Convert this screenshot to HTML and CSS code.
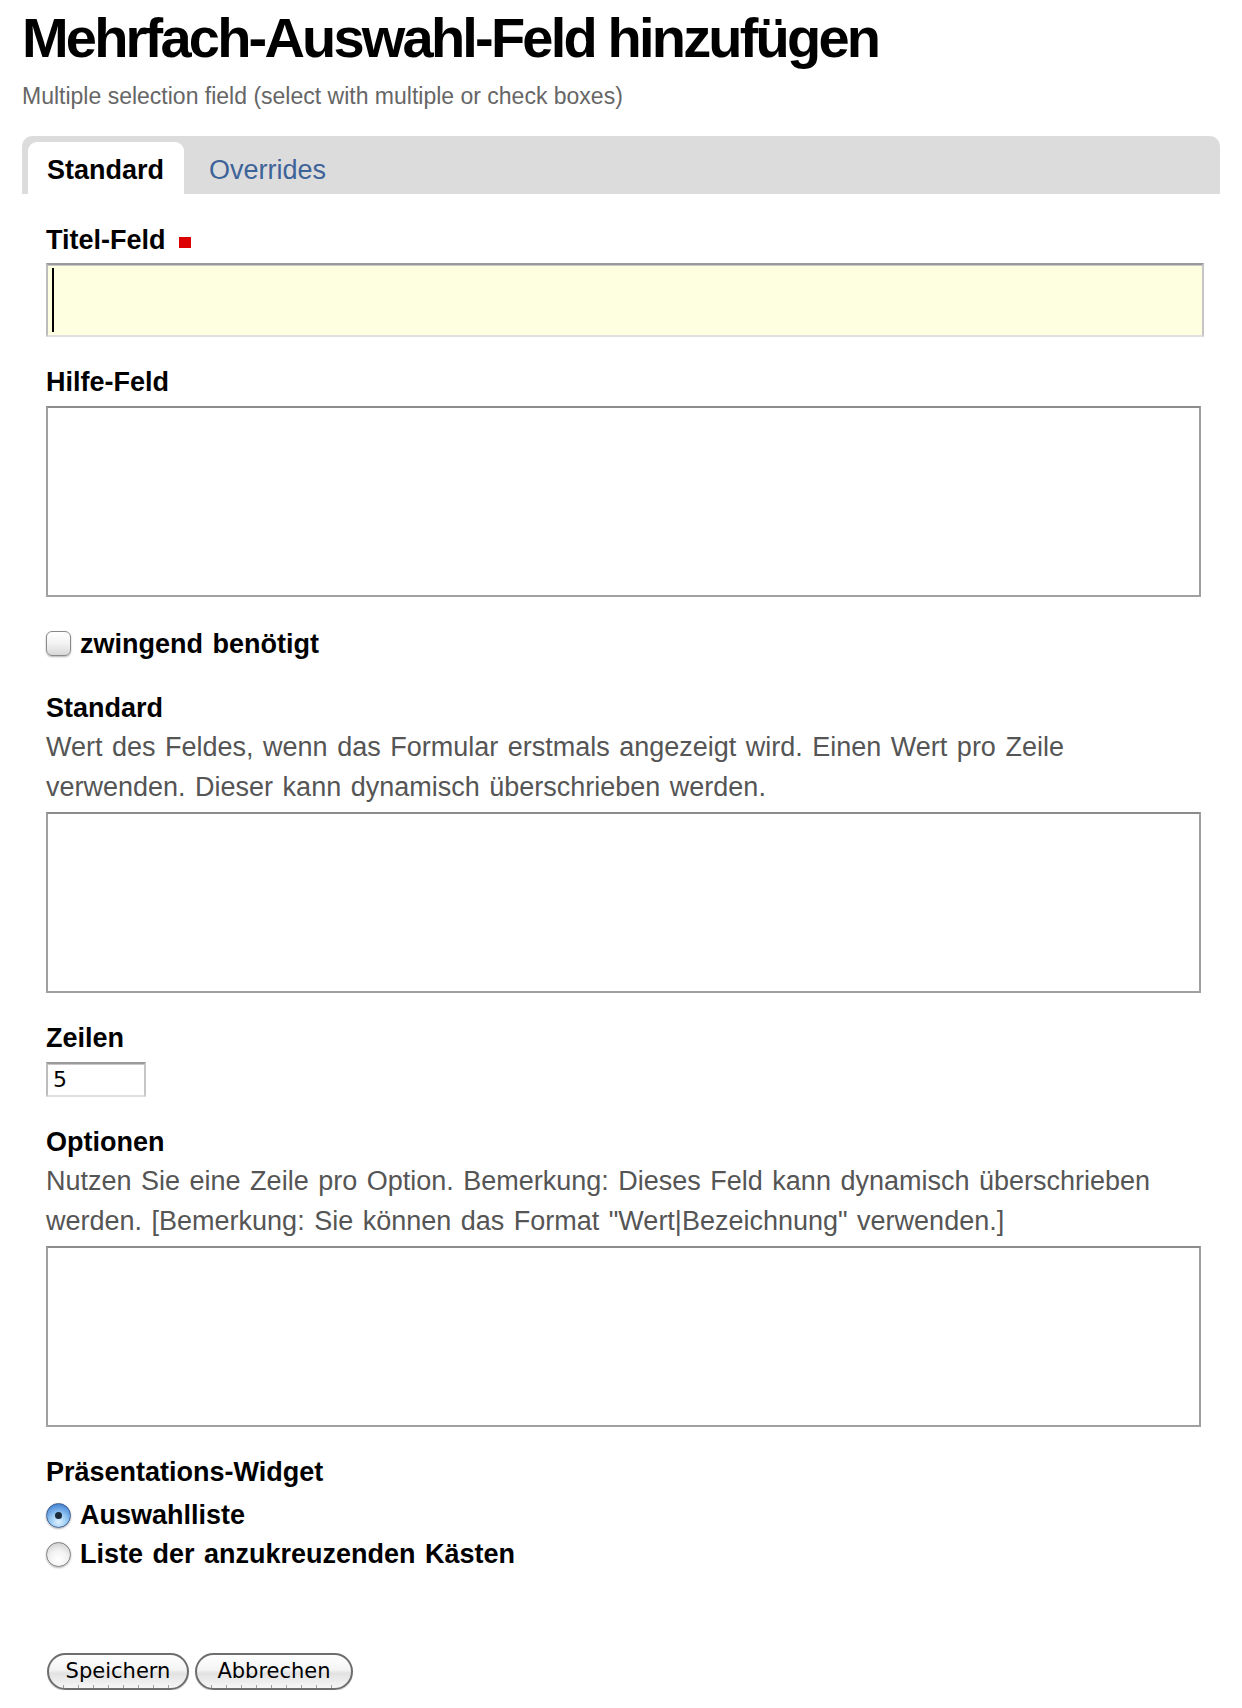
FILE: index.html
```html
<!DOCTYPE html>
<html lang="de">
<head>
<meta charset="utf-8">
<title>Mehrfach-Auswahl-Feld hinzufügen</title>
<link rel="stylesheet" href="styles.css">
</head>
<body>
<div class="page">
  <header class="head">
    <h1 class="title">Mehrfach-Auswahl-Feld hinzufügen</h1>
    <p class="subtitle">Multiple selection field (select with multiple or check boxes)</p>
  </header>

  <nav class="tabbar">
    <span class="tab tab-active">Standard</span>
    <span class="tab tab-link">Overrides</span>
  </nav>

  <form class="form">
    <div class="field">
      <label class="label">Titel-Feld <span class="required"></span></label>
      <div class="input-wrap">
        <input class="text-input title-input" type="text">
        <span class="caret"></span>
      </div>
    </div>

    <div class="field">
      <label class="label">Hilfe-Feld</label>
      <textarea class="area area-help"></textarea>
    </div>

    <div class="field">
      <div class="choice">
        <span class="checkbox"></span>
        <span class="choice-text">zwingend benötigt</span>
      </div>
    </div>

    <div class="field">
      <label class="label">Standard</label>
      <div class="help">Wert des Feldes, wenn das Formular erstmals angezeigt wird. Einen Wert pro Zeile verwenden. Dieser kann dynamisch überschrieben werden.</div>
      <textarea class="area area-std"></textarea>
    </div>

    <div class="field">
      <label class="label">Zeilen</label>
      <input class="text-input small-input" type="text" value="5">
    </div>

    <div class="field">
      <label class="label">Optionen</label>
      <div class="help">Nutzen Sie eine Zeile pro Option. Bemerkung: Dieses Feld kann dynamisch überschrieben werden. [Bemerkung: Sie können das Format "Wert|Bezeichnung" verwenden.]</div>
      <textarea class="area area-std"></textarea>
    </div>

    <div class="field">
      <label class="label">Präsentations-Widget</label>
      <div class="radios">
        <div class="choice radio-row">
          <span class="radio radio-on"><span class="dot"></span></span>
          <span class="choice-text">Auswahlliste</span>
        </div>
        <div class="choice radio-row">
          <span class="radio"></span>
          <span class="choice-text">Liste der anzukreuzenden Kästen</span>
        </div>
      </div>
    </div>

    <div class="buttons">
      <button type="button" class="btn btn-save">Speichern</button>
      <button type="button" class="btn btn-cancel">Abbrechen</button>
    </div>
  </form>
</div>
</body>
</html>
```

FILE: styles.css
```css
* { box-sizing: border-box; }

html, body {
  margin: 0;
  padding: 0;
  background: #ffffff;
}

body {
  font-family: "Liberation Sans", Arial, Helvetica, sans-serif;
  color: #000;
}

.page {
  padding: 6px 22px 0 22px;
  width: 1242px;
}

.title {
  margin: 0;
  font-size: 56px;
  line-height: 64px;
  font-weight: bold;
  letter-spacing: -2.8px;
  color: #000;
}

.subtitle {
  margin: 11px 0 0 0;
  font-size: 23px;
  line-height: 30px;
  color: #666666;
}

.tabbar {
  margin-top: 25px;
  height: 58px;
  width: 1198px;
  background: #dcdcdc;
  border-radius: 10px 10px 0 0;
  display: flex;
  align-items: flex-end;
  padding: 0 6px;
  gap: 6px;
}

.tab {
  height: 52px;
  padding: 4px 20px 0 19px;
  line-height: 48px;
  font-size: 27px;
}

.tab-active {
  background: #ffffff;
  font-weight: bold;
  color: #000;
  border-radius: 9px 9px 0 0;
  width: 156px;
}

.tab-link {
  color: #3e6399;
}

.form {
  padding: 28px 0 0 24px;
}

.field {
  margin-bottom: 27px;
}

.label {
  display: block;
  font-size: 27px;
  line-height: 36px;
  font-weight: bold;
  margin-bottom: 5px;
}

.required {
  display: inline-block;
  width: 12px;
  height: 11px;
  background: #dd0000;
  margin-left: 6px;
  vertical-align: 1px;
}

.input-wrap {
  position: relative;
  width: 1158px;
}

.text-input {
  display: block;
  margin: 0;
  border-top: 2px solid #9a9a9a;
  border-left: 2px solid #bdbdbd;
  border-right: 2px solid #c6c6c6;
  border-bottom: 2px solid #e0e0e0;
  box-shadow: inset 0 1px 0 #c8c8c8;
  outline: none;
  border-radius: 0;
}

.title-input {
  width: 1158px;
  height: 74px;
  background: #fefee0;
}

.caret {
  position: absolute;
  left: 6px;
  top: 5px;
  width: 2px;
  height: 64px;
  background: #000;
}

.area {
  display: block;
  margin: 0;
  width: 1155px;
  border: 2px solid #a0a0a0;
  border-top-color: #8c8c8c;
  background: #fff;
  resize: none;
  outline: none;
}

.area-help {
  height: 191px;
  margin-top: 6px;
}

.area-std {
  height: 181px;
}

.help {
  font-size: 27px;
  line-height: 40px;
  color: #555555;
  word-spacing: 2px;
  margin-top: -4px;
  margin-bottom: 5px;
  width: 1160px;
}

.choice {
  display: flex;
  align-items: center;
  height: 36px;
}

.choice-text {
  font-size: 27px;
  font-weight: bold;
  line-height: 36px;
  margin-left: 9px;
  word-spacing: 2px;
}

.checkbox {
  width: 25px;
  height: 25px;
  border: 1px solid #8a8a8a;
  border-radius: 6px;
  background: linear-gradient(#ffffff, #f3f3f3 50%, #d8d8d8);
  box-shadow: 0 1px 2px rgba(0,0,0,0.3), inset 0 1px 0 #fff;
  margin-top: -1px;
}

.field:nth-child(3) {
  margin-top: 29px;
  margin-bottom: 28px;
}

.radios {
  display: flex;
  flex-direction: column;
  margin-top: 6px;
}

.radio-row {
  height: 39px;
}

.radio-row .choice-text {
  line-height: 39px;
}

.radio {
  position: relative;
  width: 25px;
  height: 25px;
  border-radius: 50%;
  border: 1px solid #7e7e7e;
  background: radial-gradient(circle at 50% 72%, #ffffff 0%, #f2f2f2 45%, #c4c4c4 100%);
  box-shadow: 0 1px 2px rgba(0,0,0,0.3);
  display: flex;
  align-items: center;
  justify-content: center;
}

.radio-on {
  border-color: #3f5f8e;
  background: radial-gradient(circle at 50% 78%, #dff1ff 0%, #9acbf4 38%, #4a8ad6 80%, #2c5fa0 100%);
}

.dot {
  width: 7px;
  height: 7px;
  border-radius: 50%;
  background: #1a2a3a;
}

.small-input {
  width: 100px;
  height: 35px;
  background: #fff;
  font-family: "DejaVu Sans", Verdana, sans-serif;
  font-size: 22px;
  padding: 0 0 0 5px;
  color: #000;
  margin-top: 6px;
}

.buttons {
  display: flex;
  gap: 6px;
  margin-top: 79px;
  padding-left: 1px;
}

.btn {
  height: 37px;
  border: 2px solid #6e6e6e;
  border-radius: 19px;
  background:
    repeating-linear-gradient(90deg, transparent 0 14px, rgba(0,0,0,0.35) 14px 15px) bottom / 100% 3px no-repeat,
    linear-gradient(#ffffff 0%, #f4f4f4 45%, #e2e2e2 55%, #f6f6f6 100%);
  font-family: "DejaVu Sans", Verdana, sans-serif;
  font-size: 21px;
  color: #000;
  padding: 0 15px;
  line-height: 33px;
  margin: 0;
  box-shadow: 0 1px 1px rgba(0,0,0,0.2);
}

.btn-save { width: 142px; }
.btn-cancel { width: 158px; }
```
